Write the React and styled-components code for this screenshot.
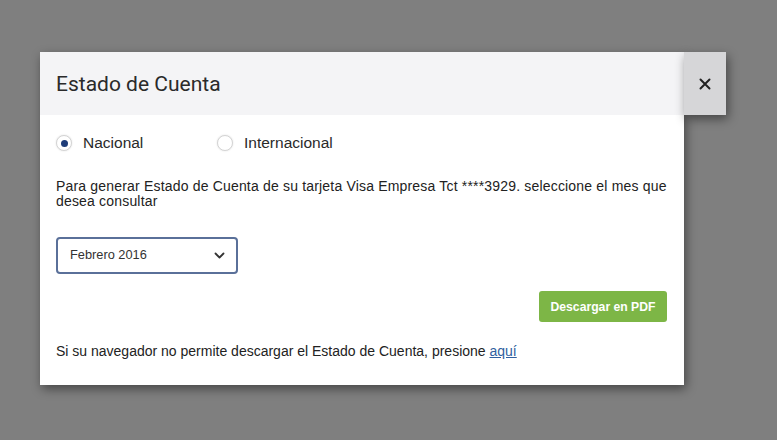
import React, { useState } from "react";
import styled, { createGlobalStyle } from "styled-components";

const GlobalStyle = createGlobalStyle`
  html, body {
    margin: 0;
    padding: 0;
    background: #7f7f7f;
  }
  body {
    font-family: "Liberation Sans", Arial, sans-serif;
    color: #222;
  }
`;

const Page = styled.div`
  width: 777px;
  height: 440px;
  box-sizing: border-box;
  padding: 52px 0 0 40px;
  display: flex;
  align-items: flex-start;
`;

const Modal = styled.div`
  width: 644px;
  background: #fff;
  box-shadow: 2px 4px 10px rgba(0, 0, 0, 0.45);
  display: flex;
  flex-direction: column;
`;

const Header = styled.div`
  height: 63px;
  background: #f4f4f6;
  display: flex;
  align-items: center;
  padding: 0 16px;
  box-sizing: border-box;
`;

const Title = styled.h1`
  margin: 0;
  font-family: Roboto, "Liberation Sans", sans-serif;
  font-weight: 400;
  font-size: 21px;
  color: #2a2a2a;
  padding-top: 1px;
`;

const CloseButton = styled.button`
  width: 42px;
  height: 63px;
  border: none;
  background: #d6d6d8;
  display: flex;
  align-items: center;
  justify-content: center;
  cursor: pointer;
  box-shadow: 2px 4px 10px rgba(0, 0, 0, 0.45);
  padding: 0;
`;

const Body = styled.div`
  padding: 20px 17px 26px 16px;
  display: flex;
  flex-direction: column;
`;

const RadioRow = styled.div`
  display: flex;
  align-items: center;
  height: 16px;
`;

const RadioLabel = styled.label`
  display: flex;
  align-items: center;
  gap: 11px;
  width: 161px;
  font-size: 15.5px;
  color: #2a2a2a;
  cursor: pointer;
`;

const RadioCircle = styled.span`
  width: 16px;
  height: 16px;
  flex: none;
  box-sizing: border-box;
  border-radius: 50%;
  border: 1px solid #d4d4d4;
  background: #fff;
  box-shadow: 0 0 2px rgba(0, 0, 0, 0.12);
  display: flex;
  align-items: center;
  justify-content: center;
  &::after {
    content: "";
    width: 7px;
    height: 7px;
    border-radius: 50%;
    background: ${(p) => (p.checked ? "#1d3c78" : "transparent")};
  }
`;

const Text = styled.p`
  margin: 28px 0 0;
  font-size: 14px;
  letter-spacing: 0.18px;
  line-height: 15px;
  color: #222;
`;

const SelectBox = styled.div`
  margin-top: 28px;
  width: 182px;
  height: 37px;
  box-sizing: border-box;
  border: 2px solid #5a7099;
  border-radius: 4px;
  display: flex;
  align-items: center;
  justify-content: space-between;
  padding: 0 11px 0 12px;
  font-size: 12.8px;
  color: #333;
`;

const SelectValue = styled.span`
  margin-top: -3px;
`;

const ButtonRow = styled.div`
  display: flex;
  justify-content: flex-end;
  margin-top: 17px;
`;

const PdfButton = styled.button`
  width: 128px;
  height: 31px;
  border: none;
  border-radius: 3px;
  background: #7db646;
  color: #fff;
  font-family: "Liberation Sans", Arial, sans-serif;
  font-size: 12.2px;
  font-weight: 700;
  cursor: pointer;
`;

const Footer = styled.p`
  margin: 22px 0 0;
  font-size: 14px;
  line-height: 15px;
  color: #222;
`;

const Link = styled.a`
  color: #2f5fa0;
  text-decoration: underline;
`;

const options = ["Nacional", "Internacional"];

export default function App() {
  const [selected, setSelected] = useState("Nacional");

  return (
    <>
      <GlobalStyle />
      <Page>
        <Modal>
          <Header>
            <Title>Estado de Cuenta</Title>
          </Header>
          <Body>
            <RadioRow>
              {options.map((opt) => (
                <RadioLabel key={opt} onClick={() => setSelected(opt)}>
                  <RadioCircle checked={selected === opt} />
                  {opt}
                </RadioLabel>
              ))}
            </RadioRow>
            <Text>
              Para generar Estado de Cuenta de su tarjeta Visa Empresa Tct ****3929. seleccione el mes que
              <br />
              desea consultar
            </Text>
            <SelectBox>
              <SelectValue>Febrero 2016</SelectValue>
              <svg width="11" height="7" viewBox="0 0 11 7" fill="none">
                <path d="M1.5 1.5l4 4 4-4" stroke="#333" strokeWidth="1.8" strokeLinecap="round" strokeLinejoin="round" />
              </svg>
            </SelectBox>
            <ButtonRow>
              <PdfButton>Descargar en PDF</PdfButton>
            </ButtonRow>
            <Footer>
              Si su navegador no permite descargar el Estado de Cuenta, presione <Link href="#">aquí</Link>
            </Footer>
          </Body>
        </Modal>
        <CloseButton aria-label="Cerrar">
          <svg width="12" height="12" viewBox="0 0 12 12">
            <path d="M1.5 1.5l9 9M10.5 1.5l-9 9" stroke="#222" strokeWidth="2" strokeLinecap="round" />
          </svg>
        </CloseButton>
      </Page>
    </>
  );
}
